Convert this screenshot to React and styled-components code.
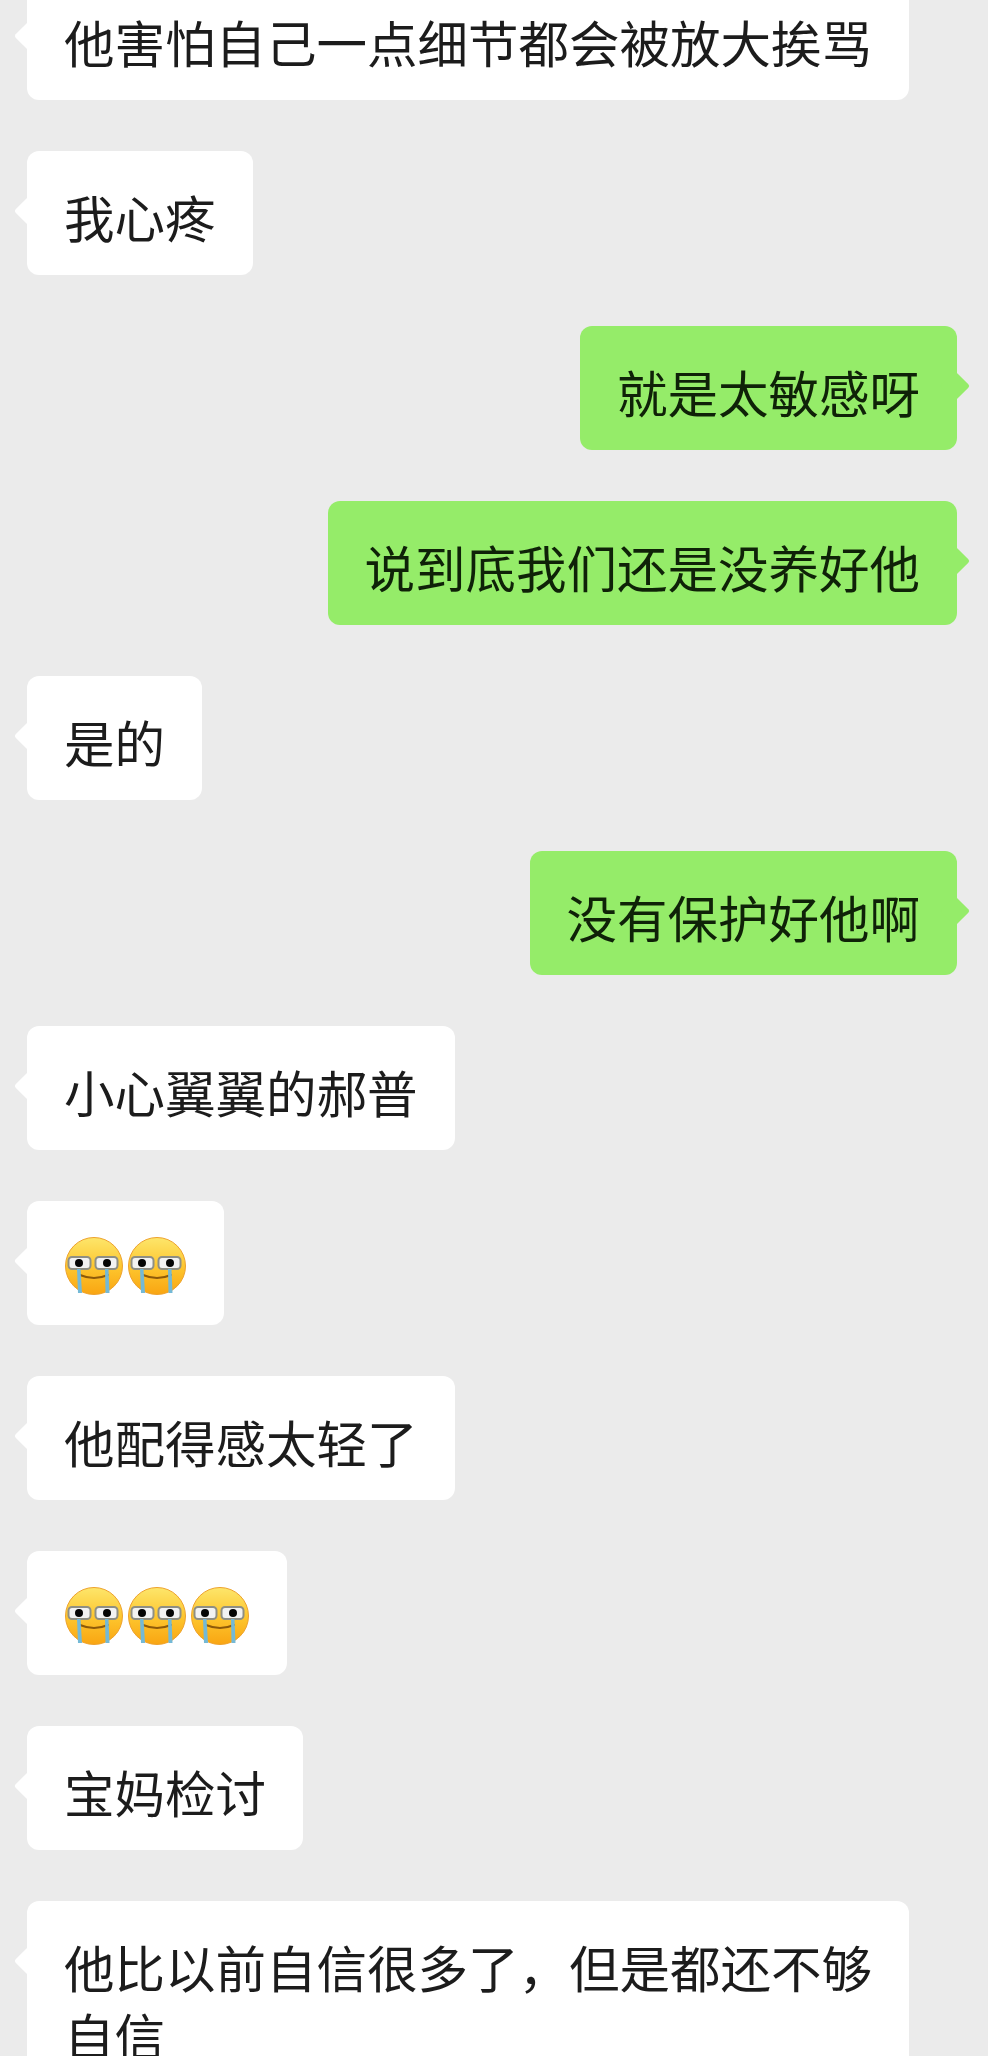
import React from "react";
import styled, { createGlobalStyle } from "styled-components";

const Global = createGlobalStyle`
  html, body { margin: 0; padding: 0; background: #ebebeb; }
  body { width: 988px; height: 2056px; overflow: hidden; }
`;

const Chat = styled.main`
  display: flex;
  flex-direction: column;
  gap: 51px;
  margin-top: -24px;
  padding: 0 31px 0 27px;
  font-family: "Noto Sans CJK SC", "Noto Sans", sans-serif;
`;

const Row = styled.div`
  display: flex;
  justify-content: ${(p) => (p.$mine ? "flex-end" : "flex-start")};
`;

const Bubble = styled.div`
  position: relative;
  box-sizing: border-box;
  max-width: 882px;
  min-height: 123px;
  padding: 31px 37px 25px;
  border-radius: 12px;
  background: ${(p) => (p.$mine ? "#95ec69" : "#ffffff")};
  color: ${(p) => (p.$mine ? "#0f2208" : "#1c1c1c")};
  font-size: 50.5px;
  line-height: 68px;
  &::before {
    content: "";
    position: absolute;
    top: ${(p) => (p.$tall ? "46px" : "47px")};
    ${(p) => (p.$mine ? "right: -11px;" : "left: -11px;")}
    width: 26px;
    height: 26px;
    border-radius: 3px;
    background: inherit;
    transform: rotate(45deg) scale(0.82);
  }
`;

const EmojiRow = styled.div`
  display: flex;
  gap: 3px;
  height: 68px;
  align-items: center;
`;

function CryEmoji() {
  return (
    <svg width="60" height="60" viewBox="0 0 60 60" aria-label="流泪">
      <defs>
        <linearGradient id="face" x1="0" y1="0" x2="0" y2="1">
          <stop offset="0" stopColor="#fde66b" />
          <stop offset="0.55" stopColor="#fdc42c" />
          <stop offset="1" stopColor="#f9a512" />
        </linearGradient>
      </defs>
      <circle cx="30" cy="30" r="28.5" fill="url(#face)" stroke="#eea22d" strokeWidth="1" />
      <path d="M16 39q14 6 28 0" fill="none" stroke="#8d5a0a" strokeWidth="2" strokeLinecap="round" />
      <rect x="4.5" y="21" width="22" height="12" rx="3.5" fill="#f2f2f2" stroke="#8f8f83" strokeWidth="2" />
      <rect x="31.5" y="21" width="22" height="12" rx="3.5" fill="#f2f2f2" stroke="#8f8f83" strokeWidth="2" />
      <circle cx="15" cy="27" r="4" fill="#050505" />
      <circle cx="43" cy="27" r="4" fill="#050505" />
      <path d="M13 33h3.5l1.5 24h-4z" fill="#74b9d6" />
      <path d="M41 33h3.5l1 24h-4z" fill="#74b9d6" />
    </svg>
  );
}

const messages = [
  { text: "他害怕自己一点细节都会被放大挨骂" },
  { text: "我心疼" },
  { text: "就是太敏感呀", mine: true },
  { text: "说到底我们还是没养好他", mine: true },
  { text: "是的" },
  { text: "没有保护好他啊", mine: true },
  { text: "小心翼翼的郝普" },
  { emoji: 2 },
  { text: "他配得感太轻了" },
  { emoji: 3 },
  { text: "宝妈检讨" },
  { text: "他比以前自信很多了，但是都还不够自信" },
];

export default function App() {
  return (
    <>
      <Global />
      <Chat>
        {messages.map((m, i) => (
          <Row key={i} $mine={m.mine}>
            <Bubble $mine={m.mine}>
              {m.emoji ? (
                <EmojiRow>
                  {Array.from({ length: m.emoji }, (_, k) => (
                    <CryEmoji key={k} />
                  ))}
                </EmojiRow>
              ) : (
                m.text
              )}
            </Bubble>
          </Row>
        ))}
      </Chat>
    </>
  );
}
